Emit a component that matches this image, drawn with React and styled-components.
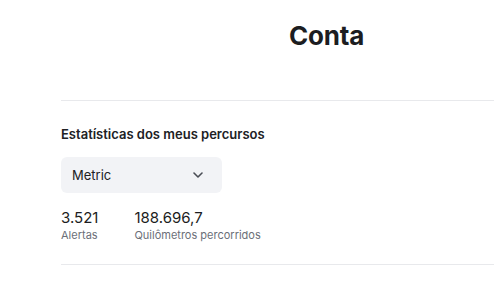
import React from "react";
import styled, { createGlobalStyle } from "styled-components";

const GlobalStyle = createGlobalStyle`
  html, body {
    margin: 0;
    padding: 0;
    background: #ffffff;
    overflow: hidden;
  }
  body {
    font-family: Inter, "Noto Sans", sans-serif;
    color: #202124;
  }
`;

const Page = styled.main`
  padding-left: 61px;
`;

const Title = styled.h1`
  margin: 0;
  height: 101px;
  box-sizing: border-box;
  padding: 20px 0 0 98px;
  text-align: center;
  font-size: 26px;
  font-weight: 700;
  letter-spacing: -0.2px;
  color: #1c1d21;
  border-bottom: 1px solid #e8e9ec;
`;

const Section = styled.section`
  padding: 23px 0 21px;
  border-bottom: 1px solid #e8e9ec;
`;

const SectionTitle = styled.h2`
  margin: 0 0 13px;
  font-size: 13px;
  font-weight: 600;
  line-height: 20px;
  color: #202124;
`;

const Select = styled.button`
  display: flex;
  align-items: center;
  justify-content: space-between;
  width: 161px;
  height: 36px;
  padding: 0 19px 0 11px;
  box-sizing: border-box;
  border: none;
  border-radius: 6px;
  background: #f2f3f6;
  font-family: inherit;
  font-size: 13px;
  color: #202124;
  cursor: pointer;
`;

const Stats = styled.div`
  display: flex;
  gap: 36px;
  margin-top: 15px;
`;

const Stat = styled.div`
  display: flex;
  flex-direction: column;
`;

const Value = styled.span`
  font-size: 15px;
  line-height: 20px;
  color: #1c1d21;
`;

const Label = styled.span`
  font-size: 11px;
  line-height: 15px;
  color: #6b6f78;
`;

const Chevron = () => (
  <svg width="10" height="6" viewBox="0 0 10 6" fill="none">
    <path d="M1 1l4 4 4-4" stroke="#4a4d55" strokeWidth="1.6" strokeLinecap="round" strokeLinejoin="round" />
  </svg>
);

const App = () => {
  const stats = [
    { value: "3.521", label: "Alertas" },
    { value: "188.696,7", label: "Quilômetros percorridos" },
  ];
  return (
    <Page>
      <GlobalStyle />
      <Title>Conta</Title>
      <Section>
        <SectionTitle>Estatísticas dos meus percursos</SectionTitle>
        <Select>
          Metric
          <Chevron />
        </Select>
        <Stats>
          {stats.map(s => (
            <Stat key={s.label}>
              <Value>{s.value}</Value>
              <Label>{s.label}</Label>
            </Stat>
          ))}
        </Stats>
      </Section>
    </Page>
  );
};

export default App;
